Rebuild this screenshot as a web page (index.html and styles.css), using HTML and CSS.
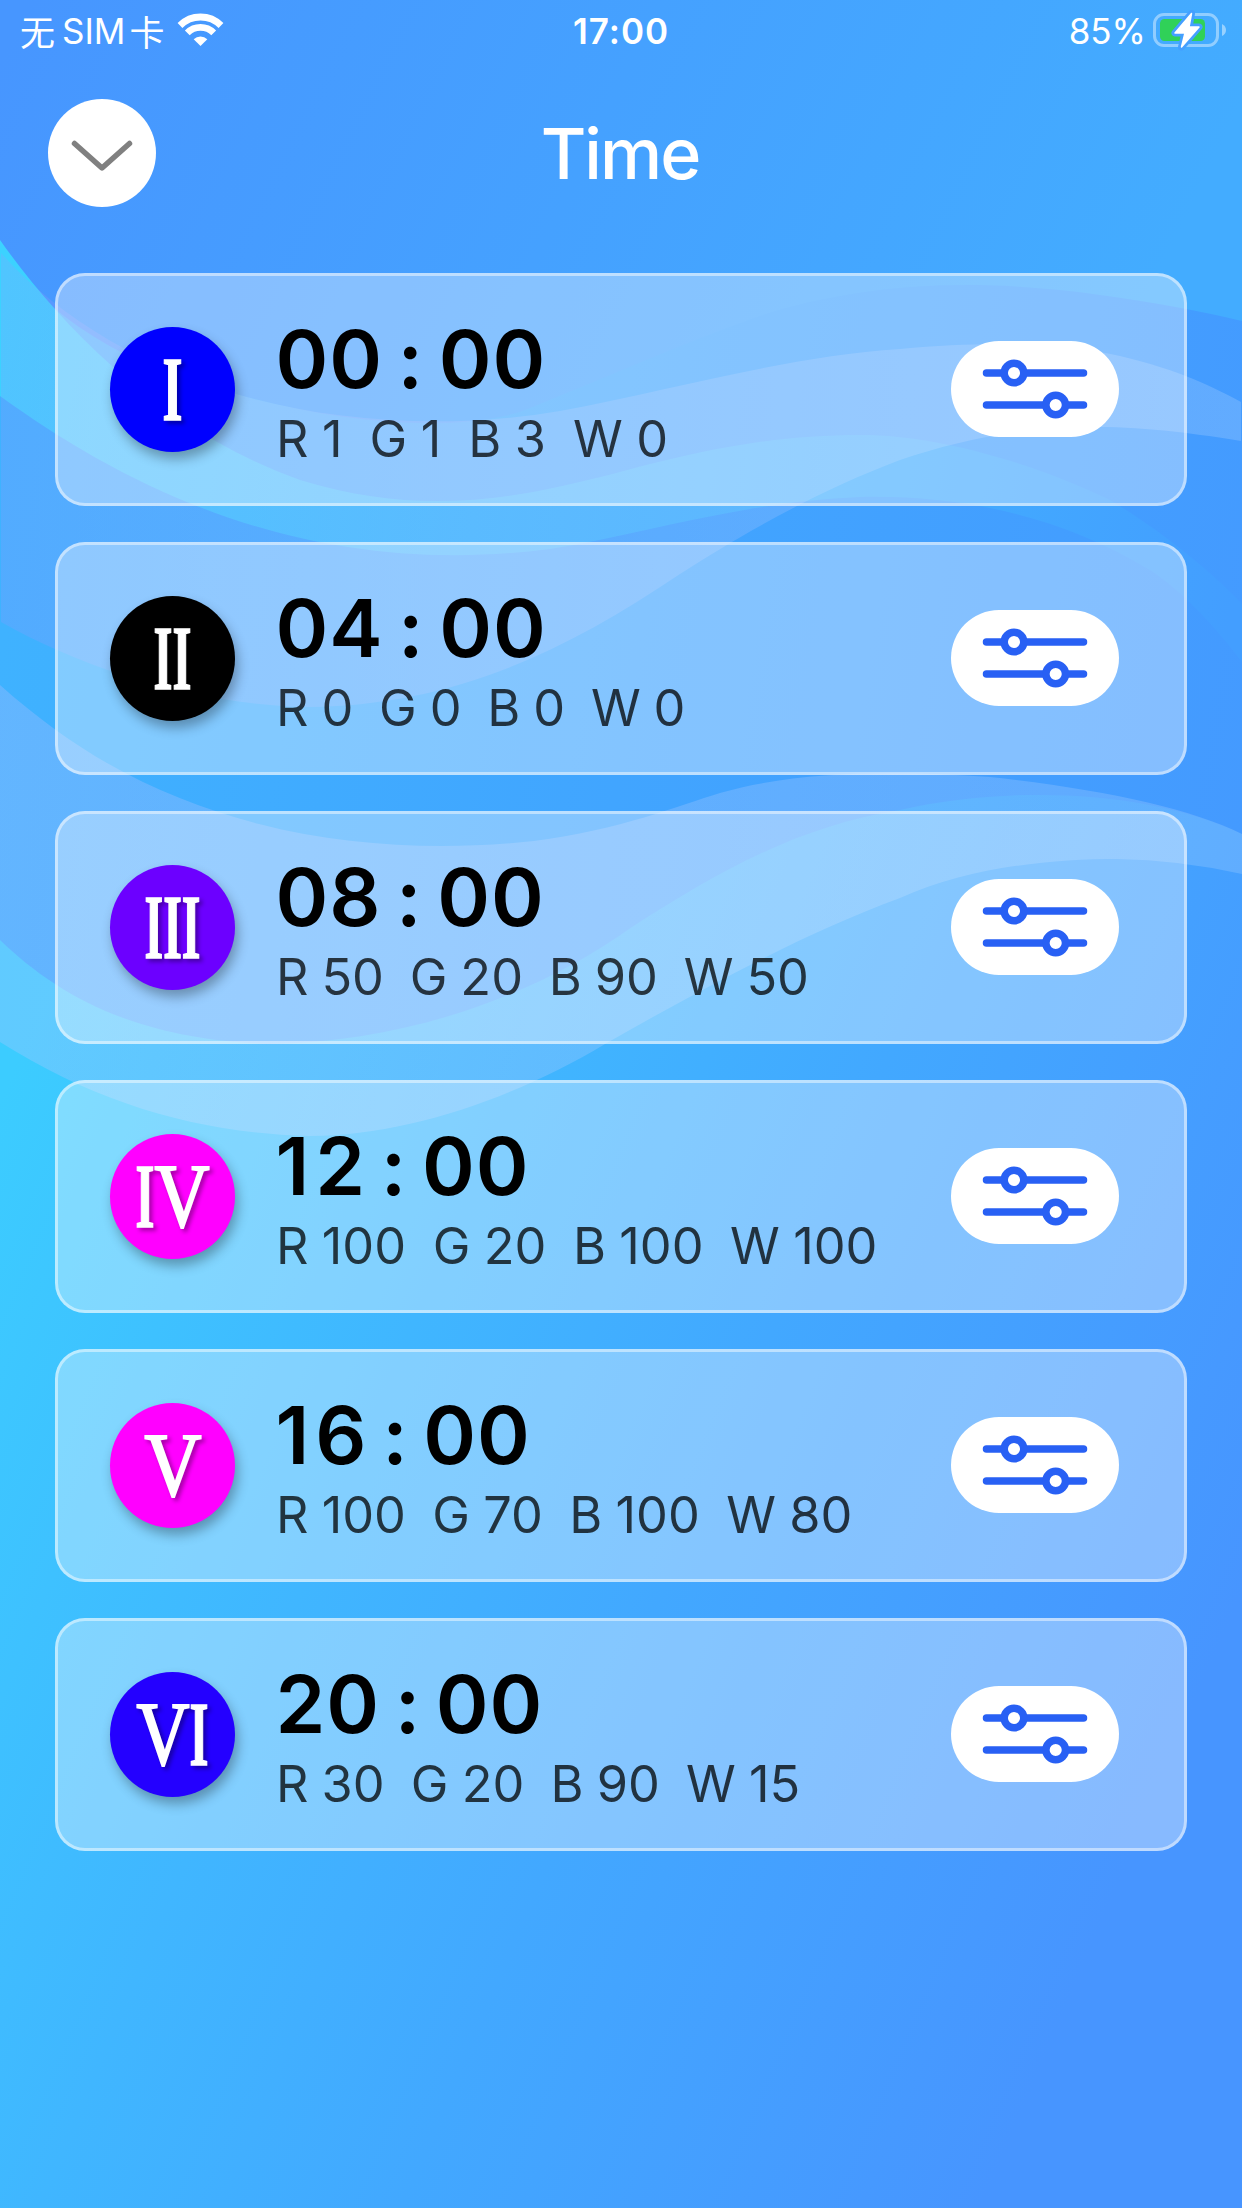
FILE: index.html
```html
<!DOCTYPE html>
<html lang="en">
<head>
<meta charset="utf-8">
<title>Time</title>
<link rel="stylesheet" href="styles.css">
</head>
<body>
<div class="screen">
  <svg class="waves" viewBox="0 0 1242 2208" aria-hidden="true">
    <defs>
      <linearGradient id="sky" gradientUnits="userSpaceOnUse" x1="0" y1="60" x2="1020" y2="560"><stop offset="0" stop-color="#4796ff"/><stop offset="1" stop-color="#43acff"/></linearGradient>
      <linearGradient id="mid" gradientUnits="userSpaceOnUse" x1="0" y1="650" x2="1242" y2="850"><stop offset="0" stop-color="#3fb2ff"/><stop offset=".5" stop-color="#41a5ff"/><stop offset="1" stop-color="#449aff"/></linearGradient>
      <linearGradient id="low" gradientUnits="userSpaceOnUse" x1="0" y1="1100" x2="1230" y2="1621"><stop offset="0" stop-color="#3cccff"/><stop offset=".35" stop-color="#40b6ff"/><stop offset=".6" stop-color="#42a8ff"/><stop offset="1" stop-color="#4795ff"/></linearGradient>
      <linearGradient id="cyan" gradientUnits="userSpaceOnUse" x1="0" y1="300" x2="1242" y2="560"><stop offset="0" stop-color="#3cd2ff"/><stop offset=".4" stop-color="#42bbff"/><stop offset=".75" stop-color="#42abff"/><stop offset="1" stop-color="#439eff"/></linearGradient>
      <linearGradient id="veil1" gradientUnits="userSpaceOnUse" x1="0" y1="0" x2="1242" y2="0"><stop offset="0" stop-color="#a091ff" stop-opacity=".2"/><stop offset="1" stop-color="#fff" stop-opacity=".16"/></linearGradient>
      <linearGradient id="veil2" gradientUnits="userSpaceOnUse" x1="0" y1="0" x2="1242" y2="0"><stop offset="0" stop-color="#f0c4ff" stop-opacity=".2"/><stop offset="1" stop-color="#fff" stop-opacity=".15"/></linearGradient>
    </defs>
    <path fill="url(#sky)" d="M0 0H1242V1100H0Z"/>
    <path fill="url(#mid)" d="M0 253C60 330 150 375 236 394C330 420 440 435 520 412C600 380 690 340 760 316C850 287 960 275 1100 295Q1180 306 1242 321V1100H0Z"/>
    <path fill="url(#low)" d="M0 940C60 998 140 1040 270 1044C400 1042 530 1000 632 927C720 870 800 826 900 810C1010 785 1150 790 1242 834V2208H0Z"/>
    <path fill="url(#cyan)" d="M0 240C60 325 160 430 300 480C430 520 530 495 620 472C720 445 790 434 870 435C960 438 1060 475 1110 500C1160 530 1210 570 1242 604V662C1210 620 1180 590 1150 570C1060 515 960 495 860 497C740 502 640 535 550 549C310 580 130 490 0 396Z"/>
    <path fill="url(#veil1)" d="M1 253C60 320 150 370 236 394C330 422 450 430 560 411C680 388 790 356 900 349C1000 340 1070 345 1120 356C1180 370 1215 388 1241 402V441C1200 434 1140 426 1090 427C1020 427 960 440 900 460C820 490 740 535 680 574C560 655 450 705 309 707C200 705 90 672 1 622Z"/>
    <path fill="url(#veil2)" d="M0 685C90 765 170 800 259 824C350 848 450 850 534 841C620 830 680 805 720 793C800 770 900 771 990 777C1100 789 1190 808 1242 834V874Q1180 860 1117 859C1050 859 970 867 900 898C800 935 700 990 605 1044C520 1095 410 1136 309 1136C200 1133 100 1105 0 1042Z"/>
  </svg>

  <div class="status">
    <div class="carrier"><span class="han">无</span><span>SIM</span><span class="han">卡</span>
      <svg class="wifi" width="46" height="34" viewBox="0 0 46 34"><g fill="none" stroke="#fff" stroke-width="6.8"><path d="M2 12.500A29 29 0 0 1 43 12.500"/><path d="M9.300 19.800A18.700 18.700 0 0 1 35.700 19.800"/></g><path fill="#fff" d="M22.500 33L15.700 26.200A9.800 9.800 0 0 1 29.300 26.200Z"/></svg>
    </div>
    <div class="clock">17:00</div>
    <div class="power"><span>85%</span>
      <svg class="battery" width="76" height="38" viewBox="0 0 76 38"><rect x="1.500" y="3.500" width="63" height="31" rx="9.500" fill="none" stroke="#fff" stroke-opacity=".42" stroke-width="3"/><path fill="#fff" fill-opacity=".45" d="M69 13Q73 15 73 19T69 25Z"/><rect x="7" y="8" width="45" height="22" rx="4.500" fill="#30d158"/><path d="M38.500 2.500L22 22H32L28.500 36L46 16H36Z" fill="none" stroke="#449fff" stroke-width="7" stroke-linejoin="round"/><path d="M38.500 2.500L22 22H32L28.500 36L46 16H36Z" fill="#fff" stroke="#fff" stroke-width="1.500" stroke-linejoin="round"/></svg>
    </div>
  </div>

  <header class="nav">
    <button class="back" aria-label="Close"><svg width="108" height="108" viewBox="0 0 108 108"><path d="M26.500 44.500L54 69L81.500 44.500" fill="none" stroke="#808080" stroke-width="5.500" stroke-linecap="round" stroke-linejoin="round"/></svg></button>
    <h1 class="title">Time</h1>
  </header>

  <svg class="symbols" aria-hidden="true"><symbol id="sliders" viewBox="0 0 168 96"><g fill="#fff" stroke="#2860f4" stroke-width="7.500" stroke-linecap="round"><path d="M35.500 32H132.500M35.500 64H132.500"/><circle cx="63" cy="32" r="9.800"/><circle cx="104.700" cy="64" r="9.800"/></g></symbol></svg>

  <main class="list">
    <section class="card">
      <div class="badge c1"><svg viewBox="0 0 125 125"><text x="52.500" y="92.500" textLength="20" lengthAdjust="spacingAndGlyphs">I</text></svg></div>
      <div class="info"><div class="time">00 : 00</div><div class="values v1">R 1  G 1  B 3  W 0</div></div>
      <button class="adjust" aria-label="Adjust"><svg><use href="#sliders"/></svg></button>
    </section>
    <section class="card">
      <div class="badge c2"><svg viewBox="0 0 125 125"><text x="43.500" y="92.500" textLength="38" lengthAdjust="spacingAndGlyphs">II</text></svg></div>
      <div class="info"><div class="time">04 : 00</div><div class="values v2">R 0  G 0  B 0  W 0</div></div>
      <button class="adjust" aria-label="Adjust"><svg><use href="#sliders"/></svg></button>
    </section>
    <section class="card">
      <div class="badge c3"><svg viewBox="0 0 125 125"><text x="34.500" y="92.500" textLength="56" lengthAdjust="spacingAndGlyphs">III</text></svg></div>
      <div class="info"><div class="time">08 : 00</div><div class="values v3">R 50  G 20  B 90  W 50</div></div>
      <button class="adjust" aria-label="Adjust"><svg><use href="#sliders"/></svg></button>
    </section>
    <section class="card">
      <div class="badge c4"><svg viewBox="0 0 125 125"><text y="92.500"><tspan x="25.500" textLength="19" lengthAdjust="spacingAndGlyphs">I</tspan><tspan class="vee" x="44.500" textLength="55" lengthAdjust="spacingAndGlyphs">V</tspan></text></svg></div>
      <div class="info"><div class="time"><span class="one">1</span>2 : 00</div><div class="values v4">R 100  G 20  B 100  W 100</div></div>
      <button class="adjust" aria-label="Adjust"><svg><use href="#sliders"/></svg></button>
    </section>
    <section class="card">
      <div class="badge c5"><svg viewBox="0 0 125 125"><text class="vee" x="34.500" y="92.500" textLength="57" lengthAdjust="spacingAndGlyphs">V</text></svg></div>
      <div class="info"><div class="time"><span class="one">1</span>6 : 00</div><div class="values v5">R 100  G 70  B 100  W 80</div></div>
      <button class="adjust" aria-label="Adjust"><svg><use href="#sliders"/></svg></button>
    </section>
    <section class="card">
      <div class="badge c6"><svg viewBox="0 0 125 125"><text y="92.500"><tspan class="vee" x="26.500" textLength="53" lengthAdjust="spacingAndGlyphs">V</tspan><tspan x="79.500" textLength="19" lengthAdjust="spacingAndGlyphs">I</tspan></text></svg></div>
      <div class="info"><div class="time">20 : 00</div><div class="values v6">R 30  G 20  B 90  W 15</div></div>
      <button class="adjust" aria-label="Adjust"><svg><use href="#sliders"/></svg></button>
    </section>
  </main>
</div>
</body>
</html>
```

FILE: styles.css
```css
* { box-sizing: border-box; }
body { margin: 0; font-family: Inter, "Liberation Sans", "Noto Sans CJK SC", sans-serif; }
button { border: 0; padding: 0; background: #fff; display: block; }
svg { display: block; overflow: visible; }

.screen { position: relative; width: 1242px; height: 2208px; overflow: hidden; isolation: isolate; }
.waves { position: absolute; inset: 0; width: 1242px; height: 2208px; z-index: -1; }
.symbols { display: none; }

.status { display: grid; grid-template-columns: 1fr auto 1fr; height: 62px; line-height: 62px; font-size: 35px; color: #fff; }
.carrier { display: flex; align-items: center; padding-left: 20px; }
.han { font-family: "Noto Sans CJK SC", sans-serif; font-size: 35px; font-weight: 400; }
.carrier .han:first-child { margin-right: 7px; }
.carrier .han + .wifi { margin: 0 0 2px 13px; }
.carrier span:nth-child(2) { margin-right: 4px; }
.clock { font-weight: 600; letter-spacing: 1px; }
.power { display: flex; align-items: center; justify-content: flex-end; gap: 7px; padding-right: 13px; }
.battery { margin-bottom: 2px; }

.nav { display: grid; grid-template-columns: 108px 1fr 108px; align-items: center; height: 182px; padding: 0 48px; }
.back { width: 108px; height: 108px; border-radius: 50%; }
.title { margin: 0; padding: 2px 2px 0 0; text-align: center; font-size: 70px; font-weight: 500; letter-spacing: -2px; line-height: 90px; color: #fff; }

.list { display: flex; flex-direction: column; gap: 36px; padding: 29px 55px 0; }
.card { display: flex; align-items: center; height: 233px; padding: 0 65px 0 52px; border: 3px solid rgba(255, 255, 255, .475); border-radius: 30px; background: rgba(255, 255, 255, .35); }

.badge { width: 125px; height: 125px; border-radius: 50%; box-shadow: 3px 7px 12px rgba(0, 0, 0, .3); }
.badge svg { width: 125px; height: 125px; }
.badge text { font: bold 91px "Liberation Serif", serif; fill: #fff; stroke: #fff; stroke-width: 1.6px; filter: drop-shadow(3px 3px 2px rgba(0, 0, 0, .35)); }
.badge .vee { font-weight: 400; stroke-width: 2.2px; }
.c1 { background: #0000ff; }
.c2 { background: #000; }
.c3 { background: #6c00ff; }
.c4, .c5 { background: #ff00ff; }
.c6 { background: #2400ff; }

.info { flex: 1; padding: 9px 0 0 40px; white-space: pre; }
.time { padding-top: 1px; margin: 0 0 -1px .5px; font-size: 80px; line-height: 90px; font-weight: 600; letter-spacing: .9px; word-spacing: -6.3px; font-feature-settings: "calt" 0; color: #000; }
.one { letter-spacing: 6px; }
.values { margin-left: 1px; font-size: 50.5px; line-height: 72px; color: rgba(0, 0, 0, .75); }
.v1 { word-spacing: -.7px; }
.v2, .v3 { word-spacing: -1.3px; }
.v4 { word-spacing: -.9px; }
.v5 { word-spacing: -1px; }
.v6 { word-spacing: -1.1px; }

.adjust { width: 168px; height: 96px; margin-bottom: 1px; border-radius: 48px; }
.adjust svg { width: 168px; height: 96px; }
```
